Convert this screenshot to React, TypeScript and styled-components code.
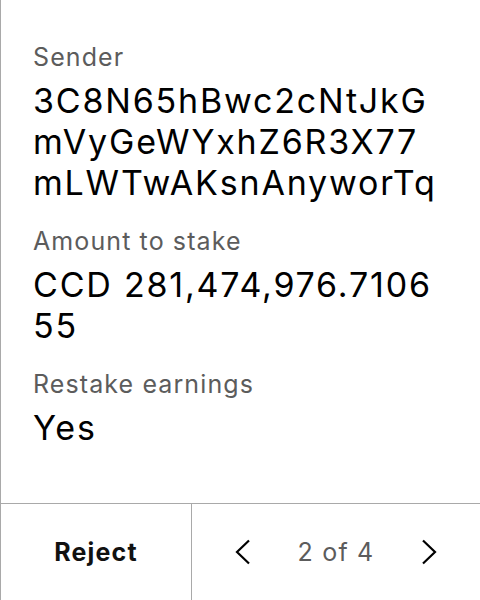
import React from "react";
import styled, { createGlobalStyle } from "styled-components";

const Global = createGlobalStyle`
  html, body { margin: 0; padding: 0; background: #fff; }
  body { font-family: Inter, "Noto Sans", sans-serif; }
  #root { height: 600px; }
`;

const Frame = styled.div`
  box-sizing: border-box;
  width: 480px;
  height: 600px;
  border-left: 1px solid #a9a9a9;
  display: flex;
  flex-direction: column;
`;

const Body = styled.div`
  flex: 1;
  padding: 42px 37px 0 32px;
  display: flex;
  flex-direction: column;
  gap: 23px;
`;

const Field = styled.div`
  display: flex;
  flex-direction: column;
  gap: 8px;
`;

const Label = styled.div`
  font-size: 25px;
  line-height: 30px;
  letter-spacing: 1.1px;
  color: #5c5c5c;
`;

const Value = styled.div`
  font-size: 34px;
  line-height: 41px;
  letter-spacing: 1.8px;
  color: #000;
  word-break: break-all;
`;

const Footer = styled.div`
  height: 96px;
  border-top: 1px solid #a9a9a9;
  display: grid;
  grid-template-columns: 191px 1fr;
`;

const RejectButton = styled.button`
  all: unset;
  display: flex;
  align-items: center;
  justify-content: center;
  border-right: 1px solid #a9a9a9;
  font-family: Inter, sans-serif;
  font-weight: 700;
  font-size: 25px;
  letter-spacing: 1.2px;
  color: #111;
`;

const Pager = styled.div`
  display: flex;
  align-items: center;
  justify-content: space-between;
  padding: 0 42px;
`;

const PagerText = styled.span`
  font-size: 25px;
  letter-spacing: 1.2px;
  color: #5c5c5c;
`;

const ArrowButton = styled.button`
  all: unset;
  display: flex;
  align-items: center;
`;

const Chevron = ({ dir }: { dir: "left" | "right" }) => (
  <svg width="17" height="26" viewBox="0 0 17 26" fill="none">
    <path
      d={dir === "left" ? "M15 1.5 L3 13 L15 24.5" : "M2 1.5 L14 13 L2 24.5"}
      stroke="#000"
      strokeWidth="2.2"
    />
  </svg>
);

export default function App() {
  return (
    <>
      <Global />
      <Frame>
        <Body>
          <Field>
            <Label>Sender</Label>
            <Value>3C8N65hBwc2cNtJkGmVyGeWYxhZ6R3X77mLWTwAKsnAnyworTq</Value>
          </Field>
          <Field>
            <Label>Amount to stake</Label>
            <Value>CCD 281,474,976.710655</Value>
          </Field>
          <Field>
            <Label>Restake earnings</Label>
            <Value>Yes</Value>
          </Field>
        </Body>
        <Footer>
          <RejectButton>Reject</RejectButton>
          <Pager>
            <ArrowButton><Chevron dir="left" /></ArrowButton>
            <PagerText>2 of 4</PagerText>
            <ArrowButton><Chevron dir="right" /></ArrowButton>
          </Pager>
        </Footer>
      </Frame>
    </>
  );
}
